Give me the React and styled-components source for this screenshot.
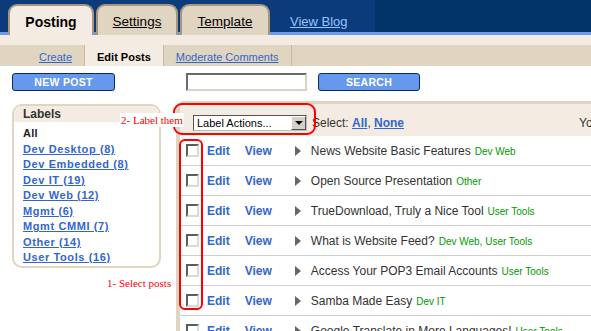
import styled, { createGlobalStyle } from 'styled-components';

const GlobalStyle = createGlobalStyle`
  html, body {
    margin: 0;
    padding: 0;
    overflow: hidden;
    background: #fff;
    font-family: 'Liberation Sans', Arial, sans-serif;
  }
`;

const Page = styled.div`
  position: relative;
  width: 591px;
  min-height: 331px;
`;

const TopBar = styled.header`
  display: flex;
  align-items: flex-end;
  height: 35px;
  background:
    linear-gradient(to bottom, transparent 32px, #6b9bef 32px),
    linear-gradient(to right, #0c3b7c 375px, #02346a 375px);
`;

const Tabs = styled.nav`
  display: flex;
  align-items: flex-end;
  gap: 2px;
  padding-left: 8px;
`;

const Tab = styled.a`
  display: flex;
  align-items: center;
  justify-content: center;
  box-sizing: border-box;
  width: ${(p) => p.$w}px;
  height: 31px;
  padding-top: 2px;
  border: 2px solid #a69680;
  border-bottom: none;
  border-radius: 9px 9px 0 0;
  background: ${(p) => (p.$active ? '#f4ece2' : '#e0d5c1')};
  color: #000;
  font-size: ${(p) => (p.$active ? '14px' : '13.5px')};
  font-weight: ${(p) => (p.$active ? 700 : 400)};
  text-decoration: ${(p) => (p.$active ? 'none' : 'underline')};
`;

const ViewBlog = styled.a`
  align-self: flex-start;
  margin: 14px 0 0 20px;
  line-height: 16px;
  font-size: 13px;
  color: #99c2ff;
  text-decoration: underline;
`;

const Strip = styled.div`
  height: 10px;
  background: #f4ece2;
`;

const SubNav = styled.nav`
  display: flex;
  height: 21px;
  padding-left: 27px;
  background: #e0d5c1;
`;

const SubTab = styled.a`
  display: flex;
  align-items: center;
  padding: 2px 12px 0;
  border-right: 1px solid #c8b89e;
  background: ${(p) => (p.$active ? '#f4ece2' : 'transparent')};
  font-size: 11px;
  font-weight: ${(p) => (p.$active ? 700 : 400)};
  color: ${(p) => (p.$active ? '#000' : '#3366cc')};
  text-decoration: ${(p) => (p.$active ? 'none' : 'underline')};
`;

const ActionBar = styled.div`
  display: flex;
  align-items: center;
  padding: 7px 0 0 12px;
`;

const BlueButton = styled.button`
  box-sizing: border-box;
  width: ${(p) => p.$w}px;
  height: 18px;
  margin-left: ${(p) => p.$ml || 0}px;
  padding: 0;
  background: #6699ee;
  border: 1px solid #0a2d5c;
  border-radius: 3px;
  color: #fff;
  font-family: 'Liberation Sans', Arial, sans-serif;
  font-size: 10.5px;
  font-weight: 700;
  letter-spacing: 0.3px;
`;

const SearchInput = styled.input`
  box-sizing: border-box;
  width: 121px;
  height: 18px;
  margin-left: 71px;
  border: 2px solid;
  border-color: #6a6a6a #d8d4cc #d8d4cc #6a6a6a;
  background: #fff;
`;

const Main = styled.div`
  display: flex;
  align-items: flex-start;
  margin-top: 10px;
`;

const Sidebar = styled.aside`
  flex-shrink: 0;
  box-sizing: border-box;
  width: 149px;
  margin: 3px 0 0 12px;
  border: 2px solid #e0d5c1;
  border-radius: 10px;
  overflow: hidden;
`;

const SideHead = styled.div`
  height: 16px;
  line-height: 16px;
  padding-left: 9px;
  background: #f4ece2;
  color: #333;
  font-size: 12px;
  font-weight: 700;
`;

const SideList = styled.ul`
  margin: 0;
  padding: 4px 0 0 9px;
  list-style: none;
`;

const SideItem = styled.li`
  line-height: 15.5px;
  font-size: 11px;
  font-weight: 700;
  white-space: nowrap;
  letter-spacing: ${(p) => (p.$plain ? '0.3px' : '0.6px')};
  color: ${(p) => (p.$plain ? '#222' : '#3366cc')};
  text-decoration: ${(p) => (p.$plain ? 'none' : 'underline')};
`;

const Panel = styled.section`
  flex: 1;
  min-width: 0;
  overflow: hidden;
  margin-left: 15px;
  border-top: 3px solid #e0d5c1;
  border-left: 4px solid #e0d5c1;
  border-top-left-radius: 8px;
`;

const Toolbar = styled.div`
  display: flex;
  align-items: center;
  box-sizing: border-box;
  height: 32px;
  padding: 6px 0 0 13px;
  background: #f4ece2;
  color: #333;
  font-size: 12px;
  white-space: nowrap;
`;

const FakeSelect = styled.div`
  display: flex;
  flex-shrink: 0;
  align-items: center;
  justify-content: space-between;
  box-sizing: border-box;
  width: 114px;
  height: 16px;
  border: 1px solid;
  border-color: #555 #bbb #bbb #555;
  background: #fff;
  color: #000;
  font-size: 11px;
  padding-left: 3px;
`;

const DropArrow = styled.span`
  display: flex;
  align-items: center;
  justify-content: center;
  box-sizing: border-box;
  width: 15px;
  height: 14px;
  background: #d4d0c8;
  border: 1px solid;
  border-color: #fff #555 #555 #fff;

  &::after {
    content: '';
    border-top: 4px solid #000;
    border-left: 4px solid transparent;
    border-right: 4px solid transparent;
  }
`;

const SelectText = styled.span`
  flex-shrink: 0;
  margin-left: 5px;
`;

const BoldLink = styled.a`
  color: #3366cc;
  font-weight: 700;
  text-decoration: underline;
`;

const Trailing = styled.span`
  flex-shrink: 0;
  margin-left: 175px;
`;

const Row = styled.div`
  display: flex;
  align-items: center;
  box-sizing: border-box;
  height: 30px;
  padding-left: 6px;
  border-bottom: 1px solid #cfcfcf;
  white-space: nowrap;
`;

const Check = styled.span`
  flex-shrink: 0;
  box-sizing: border-box;
  width: 13px;
  height: 13px;
  margin-right: 8px;
  border: 2px solid;
  border-color: #5c5c5c #dcdad4 #dcdad4 #5c5c5c;
  background: #fff;
`;

const RowLink = styled.a`
  margin-right: ${(p) => p.$mr}px;
  color: #3366cc;
  font-size: 12px;
  font-weight: 700;
`;

const Arrow = styled.span`
  flex-shrink: 0;
  width: 0;
  height: 0;
  margin-right: 10px;
  border-left: 6px solid #666;
  border-top: 5px solid transparent;
  border-bottom: 5px solid transparent;
`;

const PostTitle = styled.span`
  color: #333;
  font-size: 12px;
`;

const Tag = styled.span`
  margin-left: 4px;
  color: #009900;
  font-size: 10px;
`;

const Callout = styled.div`
  position: absolute;
  left: ${(p) => p.$x}px;
  top: ${(p) => p.$y}px;
  width: ${(p) => p.$w}px;
  height: ${(p) => p.$h}px;
  box-sizing: border-box;
  border: 2px solid #ff0000;
  border-radius: ${(p) => p.$r}px;
`;

const Note = styled.span`
  position: absolute;
  left: ${(p) => p.$x}px;
  top: ${(p) => p.$y}px;
  padding: 0 1px;
  line-height: 14px;
  background: #fff;
  color: #ff0000;
  font-family: 'Liberation Serif', 'Times New Roman', serif;
  font-size: 11px;
  white-space: nowrap;
`;

const labels = [
  'Dev Desktop (8)',
  'Dev Embedded (8)',
  'Dev IT (19)',
  'Dev Web (12)',
  'Mgmt (6)',
  'Mgmt CMMI (7)',
  'Other (14)',
  'User Tools (16)',
];

const posts = [
  { title: 'News Website Basic Features', tag: 'Dev Web' },
  { title: 'Open Source Presentation', tag: 'Other' },
  { title: 'TrueDownload, Truly a Nice Tool', tag: 'User Tools' },
  { title: 'What is Website Feed?', tag: 'Dev Web, User Tools' },
  { title: 'Access Your POP3 Email Accounts', tag: 'User Tools' },
  { title: 'Samba Made Easy', tag: 'Dev IT' },
  { title: 'Google Translate in More Languages!', tag: 'User Tools' },
];

const App = () => {
  return (
    <Page>
      <GlobalStyle />
      <TopBar>
        <Tabs>
          <Tab $w={86} $active>Posting</Tab>
          <Tab $w={82}>Settings</Tab>
          <Tab $w={90}>Template</Tab>
        </Tabs>
        <ViewBlog>View Blog</ViewBlog>
      </TopBar>
      <Strip />
      <SubNav>
        <SubTab>Create</SubTab>
        <SubTab $active>Edit Posts</SubTab>
        <SubTab>Moderate Comments</SubTab>
      </SubNav>

      <ActionBar>
        <BlueButton $w={103}>NEW POST</BlueButton>
        <SearchInput type="text" />
        <BlueButton $w={102} $ml={11}>SEARCH</BlueButton>
      </ActionBar>

      <Main>
        <Sidebar>
          <SideHead>Labels</SideHead>
          <SideList>
            <SideItem $plain>All</SideItem>
            {labels.map((l) => (
              <SideItem key={l}>{l}</SideItem>
            ))}
          </SideList>
        </Sidebar>

        <Panel>
          <Toolbar>
            <FakeSelect>
              Label Actions...
              <DropArrow />
            </FakeSelect>
            <SelectText>
              Select: <BoldLink>All</BoldLink>, <BoldLink>None</BoldLink>
            </SelectText>
            <Trailing>Your Posts</Trailing>
          </Toolbar>
          {posts.map((p) => (
            <Row key={p.title}>
              <Check />
              <RowLink $mr={15}>Edit</RowLink>
              <RowLink $mr={23}>View</RowLink>
              <Arrow />
              <PostTitle>
                {p.title}
                <Tag>{p.tag}</Tag>
              </PostTitle>
            </Row>
          ))}
        </Panel>
      </Main>

      {/* annotations drawn over the screenshot */}
      <Callout $x={173} $y={103} $w={143} $h={32} $r={9} />
      <Callout $x={179} $y={139} $w={24} $h={171} $r={6} />
      <Note $x={120} $y={113}>2- Label them</Note>
      <Note $x={106} $y={276}>1- Select posts</Note>
    </Page>
  );
};

export default App;
